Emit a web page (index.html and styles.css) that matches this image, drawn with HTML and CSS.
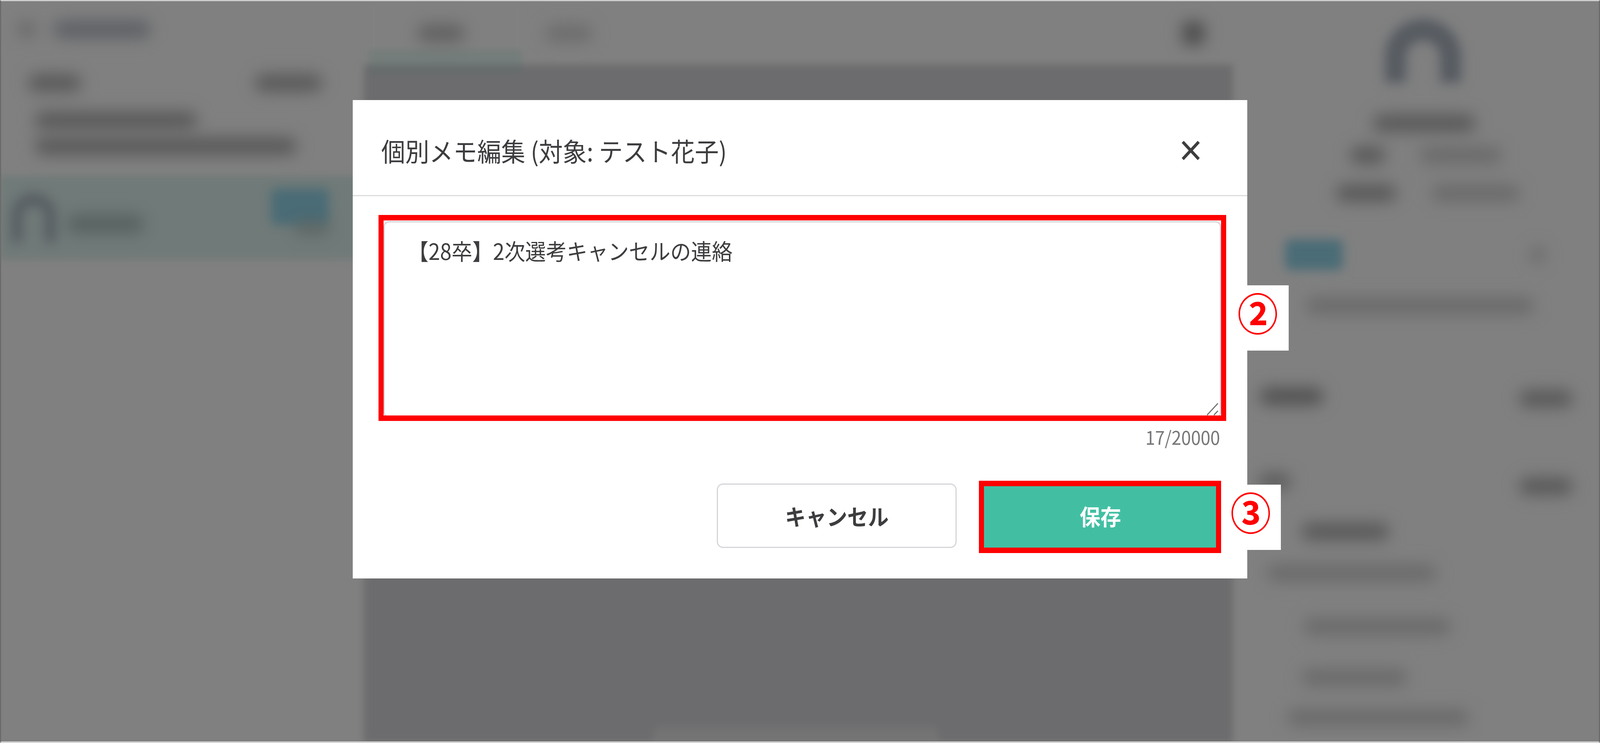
FILE: index.html
```html
<!DOCTYPE html>
<html lang="ja">
<head>
<meta charset="utf-8">
<title>個別メモ編集</title>
<link rel="stylesheet" href="styles.css">
</head>
<body>
<div class="page">
  <div class="backdrop" aria-hidden="true">
    <aside class="left">
      <div class="l-back"><span class="bar l-back-icon"></span><span class="bar l-back-text"></span></div>
      <div class="l-tabs"><span class="bar l-tab-a"></span><span class="bar l-tab-b"></span></div>
      <span class="bar l-line-a"></span>
      <span class="bar l-line-b"></span>
      <div class="l-selected">
        <span class="arch l-avatar"></span>
        <span class="bar l-name"></span>
        <div class="l-meta"><span class="badge l-badge"></span><span class="bar l-date"></span></div>
      </div>
    </aside>
    <main class="center">
      <div class="c-tabs">
        <div class="c-tab c-tab-active"><span class="bar c-tab-text"></span></div>
        <div class="c-tab"><span class="bar c-tab-text soft"></span></div>
        <span class="bar c-icon"></span>
      </div>
      <div class="c-panel"><span class="c-box"></span></div>
    </main>
    <aside class="right">
      <span class="arch r-avatar"></span>
      <span class="bar r-name"></span>
      <div class="r-row r-row-a"><span class="bar r-a1"></span><span class="bar soft r-a2"></span></div>
      <div class="r-row r-row-b"><span class="bar r-b1"></span><span class="bar soft r-b2"></span></div>
      <div class="r-row r-row-c"><span class="badge r-badge"></span><span class="bar soft r-dot"></span></div>
      <span class="bar soft r-line1"></span>
      <div class="r-row r-row-d"><span class="bar r-d1"></span><span class="bar r-d2"></span></div>
      <div class="r-row r-row-e"><span class="bar r-e1"></span><span class="bar r-d2 r-e2"></span></div>
      <span class="bar r-line2"></span>
      <span class="bar soft r-line3"></span>
      <span class="bar soft r-line4"></span>
      <span class="bar soft r-line5"></span>
      <span class="bar soft r-line6"></span>
    </aside>
  </div>

  <div class="overlay">
    <section class="modal">
      <header class="modal-head">
        <h1 class="modal-title"><span class="t t-left">個別メモ編集 (対象: テスト花子)</span></h1>
        <svg class="close" viewBox="0 0 50 50" preserveAspectRatio="none" aria-label="閉じる"><path d="M3 3 47 47M47 3 3 47"/></svg>
      </header>
      <div class="field">
        <div class="textarea"><span class="t t-left">【28卒】2次選考キャンセルの連絡</span></div>
        <svg class="grip" viewBox="0 0 32 32" preserveAspectRatio="none"><path d="M31 1 1 31M31 20 20 31"/></svg>
        <span class="frame frame-field"></span>
      </div>
      <p class="counter"><span class="t t-right">17/20000</span></p>
      <footer class="actions">
        <button class="btn btn-cancel" type="button"><span class="t">キャンセル</span></button>
        <button class="btn btn-save" type="button"><span class="t">保存</span><span class="frame frame-save"></span></button>
      </footer>
      <div class="callout callout-2"><span class="t">②</span></div>
      <div class="callout callout-3"><span class="t">③</span></div>
    </section>
  </div>
</div>
</body>
</html>
```
FILE: styles.css
```css
/* Horizontal lengths are given in 4400ths of the window, so the whole
   composition always fits the window's real width. */
:root {
  --x: calc(100vw / 4400);
  --fit: tan(atan2(100vw, 4400px));
}
* { box-sizing: border-box; }
html, body { margin: 0; padding: 0; }
body { background: #808080; font-family: "Noto Sans CJK JP", "Noto Sans", sans-serif; }

.page { position: relative; width: 100%; height: 1901px; overflow: hidden; background: #808080; }
.page::after {
  content: ""; position: absolute; inset: 0; pointer-events: none;
  border-top: 3px solid #cfcfcf; border-bottom: 4px solid #d4d4d4;
  border-left: 3px solid #6c6c6c; border-right: 3px solid #6c6c6c;
}

/* text keeps its proportions in the 4400 design */
.t { display: inline-block; white-space: nowrap; transform: scaleX(var(--fit)); filter: blur(0.6px); }
.t-left { transform-origin: left center; }
.t-right { transform-origin: right center; }

/* dimmed, blurred application behind the dialog */
.backdrop { display: flex; height: 100%; filter: blur(9px); }
.bar { display: block; height: 44px; border-radius: 22px; background: #585858; flex: none; filter: blur(18px); }
.bar.soft { background: #6a6a6a; }
.badge { display: block; background: #4a6c76; border-radius: 14px; flex: none; filter: blur(10px); }
.arch { display: block; border: 34px solid #565b61; border-bottom: 0; border-radius: 999px 999px 0 0; flex: none; filter: blur(12px); }

.left { width: calc(1000 * var(--x)); flex: none; padding-top: 52px; }
.l-back { display: flex; align-items: center; height: 46px; padding-left: calc(50 * var(--x)); }
.l-back-icon { width: calc(46 * var(--x)); background: #666; }
.l-back-text { width: calc(268 * var(--x)); margin-left: calc(51 * var(--x)); background: #5c5f64; }
.l-tabs { display: flex; justify-content: space-between; margin-top: 92px; padding: 0 calc(114 * var(--x)) 0 calc(77 * var(--x)); }
.l-tab-a { width: calc(146 * var(--x)); }
.l-tab-b { width: calc(186 * var(--x)); }
.l-line-a { width: calc(446 * var(--x)); margin: 52px 0 0 calc(96 * var(--x)); }
.l-line-b { width: calc(720 * var(--x)); margin: 22px 0 0 calc(96 * var(--x)); }
.l-selected { display: flex; align-items: flex-start; height: 214px; margin-top: 54px; padding: 0 calc(95 * var(--x)) 0 calc(32 * var(--x)); background: #707a78; }
.l-avatar { width: calc(121 * var(--x)); height: 125px; margin-top: 45px; border-width: 30px calc(30 * var(--x)) 0; }
.l-name { width: calc(210 * var(--x)); margin: 101px 0 0 calc(32 * var(--x)); background: #556060; }
.l-meta { display: flex; flex-direction: column; align-items: flex-end; margin-left: auto; padding-top: 32px; }
.l-badge { width: calc(159 * var(--x)); height: 93px; }
.l-date { width: calc(96 * var(--x)); height: 32px; margin-top: -8px; background: #5a6462; }

.center { width: calc(2390 * var(--x)); flex: none; display: flex; flex-direction: column; }
.c-tabs { position: relative; z-index: 1; display: flex; align-items: flex-start; height: 165px; padding-left: calc(14 * var(--x)); }
.c-tab { width: calc(422 * var(--x)); height: 190px; padding: 63px 0 0 calc(134 * var(--x)); flex: none; }
.c-tab-active { background: linear-gradient(#808080 127px, #747d7b 127px, #747d7b 165px, #666c6b 165px); }
.c-tab + .c-tab { width: calc(300 * var(--x)); padding-left: calc(64 * var(--x)); }
.c-tab-text { width: calc(130 * var(--x)); background: #606060; }
.c-tab-text.soft { background: #6c6c6c; }
.c-icon { width: calc(60 * var(--x)); height: 60px; margin: 55px calc(78 * var(--x)) 0 auto; border-radius: 12px; background: #4c4c4c; }
.c-panel { flex: 1; background: #6c6c6e; display: flex; align-items: flex-end; justify-content: center; }
.c-box { display: block; width: calc(785 * var(--x)); height: 42px; margin-left: calc(-12 * var(--x)); border-radius: 18px 18px 0 0; background: #737374; }

.right { flex: 1; min-width: 0; }
.r-row { display: flex; }
.r-avatar { width: calc(211 * var(--x)); height: 164px; margin: 48px 0 0 calc(418 * var(--x)); border-width: 56px calc(60 * var(--x)) 0; }
.r-name { width: calc(281 * var(--x)); margin: 81px 0 0 calc(386 * var(--x)); }
.r-row-a { margin: 38px 0 0 calc(322 * var(--x)); gap: calc(94 * var(--x)); }
.r-a1 { width: calc(98 * var(--x)); }
.r-a2 { width: calc(226 * var(--x)); }
.r-row-b { margin: 53px 0 0 calc(284 * var(--x)); gap: calc(96 * var(--x)); }
.r-b1 { width: calc(166 * var(--x)); }
.r-b2 { width: calc(244 * var(--x)); }
.r-row-c { margin: 96px 0 0 calc(144 * var(--x)); align-items: center; gap: calc(516 * var(--x)); }
.r-badge { width: calc(159 * var(--x)); height: 79px; }
.r-dot { width: calc(40 * var(--x)); }
.r-line1 { width: calc(629 * var(--x)); margin: 69px 0 0 calc(201 * var(--x)); }
.r-row-d { margin: 188px calc(75 * var(--x)) 0 calc(74 * var(--x)); justify-content: space-between; }
.r-d1 { width: calc(176 * var(--x)); background: #505050; }
.r-d2 { width: calc(147 * var(--x)); margin-top: 6px; }
.r-row-e { margin: 168px calc(75 * var(--x)) 0 calc(70 * var(--x)); justify-content: space-between; }
.r-e1 { width: calc(90 * var(--x)); background: #5c5c5c; }
.r-e2 { margin-top: 12px; }
.r-line2 { width: calc(241 * var(--x)); margin: 72px 0 0 calc(189 * var(--x)); }
.r-line3 { width: calc(467 * var(--x)); margin: 62px 0 0 calc(93 * var(--x)); background: #6e6e6e; }
.r-line4 { width: calc(405 * var(--x)); margin: 93px 0 0 calc(195 * var(--x)); }
.r-line5 { width: calc(291 * var(--x)); margin: 86px 0 0 calc(189 * var(--x)); }
.r-line6 { width: calc(500 * var(--x)); margin: 59px 0 0 calc(150 * var(--x)); }

/* dialog */
.overlay { position: absolute; inset: 0; display: flex; justify-content: center; align-items: flex-start; padding-top: 256px; }
.modal { position: relative; width: calc(2461 * var(--x)); height: 1224px; background: #fff; color: #3d3d40; }
.modal-head { display: flex; align-items: center; justify-content: space-between; height: 246px; padding: 14px calc(131 * var(--x)) 0 calc(79 * var(--x)); border-bottom: 3px solid #dcdce0; }
.modal-title { margin: 0; font-size: 66px; font-weight: 400; line-height: 1.2; white-space: nowrap; }
.close { width: calc(50 * var(--x)); height: 50px; flex: none; }
.close path { fill: none; stroke: #3d3d40; stroke-width: 8; }

.field { position: relative; margin: 64px calc(72 * var(--x)) 0 calc(85 * var(--x)); height: 497px; }
.textarea { height: calc(100% + 6px); padding: 32px calc(64 * var(--x)); border: 3px solid #d2d2d8; border-radius: 14px; font-size: 57px; line-height: 1.4; }
.grip { position: absolute; right: calc(8 * var(--x)); bottom: 0; width: calc(32 * var(--x)); height: 32px; }
.grip path { fill: none; stroke: #6f6f6f; stroke-width: 3; }
.frame { position: absolute; border: 14px solid #f00; border-width: 14px calc(14 * var(--x)); pointer-events: none; }
.frame-field { top: -16px; right: calc(-14 * var(--x)); bottom: -14px; left: calc(-14 * var(--x)); }

.counter { margin: 19px calc(75 * var(--x)) 0 0; text-align: right; font-size: 48px; line-height: 70px; color: #77777a; }

.actions { display: flex; justify-content: flex-end; gap: calc(66 * var(--x)); margin-top: 85px; padding-right: calc(75 * var(--x)); }
.btn { position: relative; width: calc(659 * var(--x)); height: 165px; padding: 0; border-radius: 16px; font: 700 57px/1 "Noto Sans CJK JP", "Noto Sans", sans-serif; }
.btn-cancel { background: #fff; border: 3px solid #d5d5da; color: #3d3d40; }
.btn-save { background: #42bfa3; border: 0; color: #fff; }
.frame-save { top: -7px; right: calc(-2 * var(--x)); bottom: -13px; left: calc(-5 * var(--x)); }

.callout { position: absolute; display: flex; justify-content: center; height: 167px; background: #fff; color: #f00; font-size: 112px; font-weight: 700; line-height: 134px; }
.callout-2 { left: calc(2406 * var(--x)); top: 474px; width: calc(168 * var(--x)); }
.callout-3 { left: calc(2388 * var(--x)); top: 984px; width: calc(165 * var(--x)); }
```
